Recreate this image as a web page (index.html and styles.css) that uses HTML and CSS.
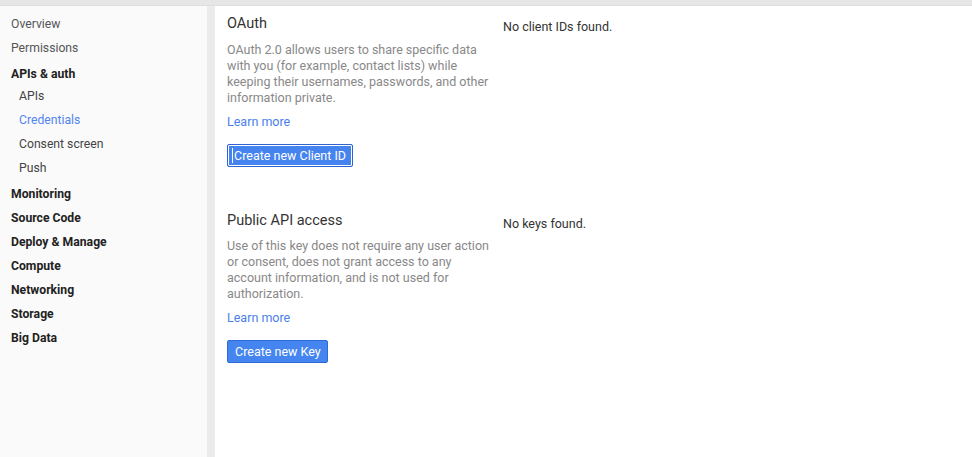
FILE: index.html
```html
<!DOCTYPE html>
<html>
<head>
<meta charset="utf-8">
<link rel="stylesheet" href="styles.css">
</head>
<body>
<div class="topbar"></div>
<div class="shell">
  <nav class="sidebar">
    <ul class="nav">
      <li class="item">Overview</li>
      <li class="item">Permissions</li>
      <li class="item group">APIs &amp; auth</li>
      <li class="item sub">APIs</li>
      <li class="item sub active">Credentials</li>
      <li class="item sub">Consent screen</li>
      <li class="item sub">Push</li>
      <li class="item group">Monitoring</li>
      <li class="item group">Source Code</li>
      <li class="item group">Deploy &amp; Manage</li>
      <li class="item group">Compute</li>
      <li class="item group">Networking</li>
      <li class="item group">Storage</li>
      <li class="item group">Big Data</li>
    </ul>
  </nav>
  <div class="gutter"></div>
  <main class="content">
    <section class="section">
      <div class="info">
        <h2 class="title">OAuth</h2>
        <p class="desc">OAuth 2.0 allows users to share specific data with you (for example, contact lists) while keeping their usernames, passwords, and other information private.</p>
        <a class="learn">Learn more</a>
        <div class="actions">
          <button class="btn focused"><span class="caret"></span>Create new Client ID</button>
        </div>
      </div>
      <div class="status">No client IDs found.</div>
    </section>
    <section class="section second">
      <div class="info">
        <h2 class="title">Public API access</h2>
        <p class="desc">Use of this key does not require any user action or consent, does not grant access to any account information, and is not used for authorization.</p>
        <a class="learn">Learn more</a>
        <div class="actions">
          <button class="btn">Create new Key</button>
        </div>
      </div>
      <div class="status">No keys found.</div>
    </section>
  </main>
</div>
</body>
</html>
```
FILE: styles.css
```css
* { box-sizing: border-box; }
html, body { margin: 0; padding: 0; height: 100%; }
body {
  font-family: Roboto, "Liberation Sans", Arial, sans-serif;
  font-size: 12.5px;
  background: #ffffff;
  display: flex;
  flex-direction: column;
  overflow: hidden;
}
.topbar {
  height: 6px;
  background: #e6e6e6;
  border-bottom: 1px solid #dedede;
  flex: none;
}
.shell {
  flex: 1;
  display: flex;
}
.sidebar {
  width: 207px;
  background: #fafafa;
  flex: none;
}
.nav {
  list-style: none;
  margin: 0;
  padding: 6px 0 0 0;
  font-size: 12.2px;
}
.item {
  height: 24px;
  line-height: 24px;
  padding-left: 11px;
  color: #555;
}
.item.group {
  font-weight: 700;
  color: #222;
  padding-top: 4px;
  line-height: 20px;
}
.item.sub {
  padding-left: 19px;
  color: #444;
}
.item.active { color: #5385f0; }
.gutter {
  width: 8px;
  background: #ebebeb;
  flex: none;
}
.content {
  flex: 1;
  background: #fff;
  padding: 0 0 0 12px;
}
.section {
  display: flex;
  padding-top: 8px;
}
.section.second { margin-top: 36px; }
.info { width: 266px; margin-right: 10px; flex: none; }
.title {
  margin: 0;
  font-size: 14.5px;
  font-weight: 400;
  line-height: 20px;
  color: #333;
}
.desc {
  margin: 8px 0 0 0;
  line-height: 16px;
  color: #888;
}
.second .desc { margin-top: 7px; }
.learn {
  display: block;
  margin-top: 8px;
  line-height: 16px;
  color: #4a80ec;
  cursor: pointer;
}
.actions { margin-top: 14px; }
.btn {
  font-family: inherit;
  font-size: 12.5px;
  color: #fff;
  background: #4585f0;
  border: 1px solid #2f6bd8;
  border-radius: 2px;
  height: 23px;
  padding: 0 6px 0 7px;
  line-height: 21px;
  display: inline-flex;
  align-items: center;
}
.btn.focused {
  background: #4583ee;
  border-color: #2f63cf;
  box-shadow: inset 0 0 0 1px #ffffff;
  padding-left: 4px;
}
.caret {
  display: inline-block;
  width: 1px;
  height: 15px;
  background: #ffffff;
  margin-right: 1px;
}
.status {
  margin-top: 5px;
  line-height: 16px;
  color: #333;
}
```
